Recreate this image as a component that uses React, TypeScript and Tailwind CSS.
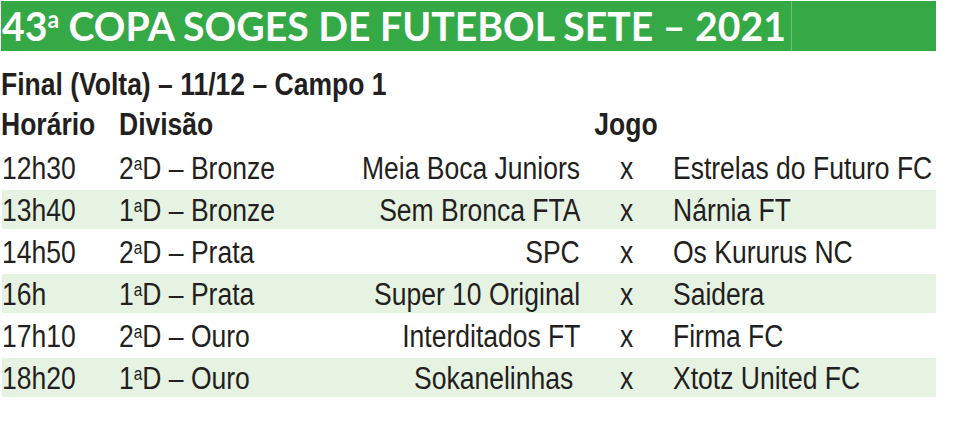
import type { ReactNode } from 'react'

type Match = {
  time: string
  rank: string
  level: string
  home: string
  away: string
  homePad?: boolean
}

const matches: Match[] = [
  { time: '12h30', rank: '2', level: 'Bronze', home: 'Meia Boca Juniors', away: 'Estrelas do Futuro FC' },
  { time: '13h40', rank: '1', level: 'Bronze', home: 'Sem Bronca FTA', away: 'Nárnia FT' },
  { time: '14h50', rank: '2', level: 'Prata', home: 'SPC', away: 'Os Kururus NC' },
  { time: '16h', rank: '1', level: 'Prata', home: 'Super 10 Original', away: 'Saidera' },
  { time: '17h10', rank: '2', level: 'Ouro', home: 'Interditados FT', away: 'Firma FC' },
  { time: '18h20', rank: '1', level: 'Ouro', home: 'Sokanelinhas', away: 'Xtotz United FC', homePad: true },
]

// narrow text: Arial metrics squeezed horizontally
function N({ children, align = 'left' }: { children: ReactNode; align?: 'left' | 'right' | 'center' }) {
  const origin = align === 'right' ? 'origin-right' : align === 'center' ? 'origin-center' : 'origin-left'
  return <span className={`inline-block whitespace-nowrap scale-x-[0.855] ${origin}`}>{children}</span>
}

function Division({ rank, level }: { rank: string; level: string }) {
  return (
    <N>
      {rank}
      <span className="relative -top-[9px] text-[18px]">a</span>D – {level}
    </N>
  )
}

export default function App() {
  return (
    <div
      className="h-[426px] w-[954px] overflow-hidden bg-white text-[#231f20]"
      style={{ fontFamily: '"Liberation Sans", Arial, sans-serif' }}
    >
      {/* Title band */}
      <div className="ml-[1px] mt-[1px] flex h-[50px] w-[935px]">
        <div className="w-[791px] shrink-0 overflow-hidden border-r border-[#6cc278] bg-[#34a946]">
          <h1
            className="origin-left scale-x-[0.955] whitespace-nowrap pl-[1px] text-[41px] font-bold leading-[50px] text-white"
            style={{ fontFamily: 'Lato, "Noto Sans", sans-serif' }}
          >
            43<span className="relative -top-[13px] text-[24px]">a</span> COPA SOGES DE FUTEBOL SETE – 2021
          </h1>
        </div>
        <div className="flex-1 bg-[#34a946]" />
      </div>

      {/* Subtitle */}
      <div className="ml-[1px] mt-[14px] h-[40px] text-[31px] font-bold leading-[40px]">
        <N>Final (Volta) – 11/12 – Campo 1</N>
      </div>

      {/* Column headings */}
      <div className="ml-[1px] flex h-[40px] w-[934px] text-[31px] font-bold leading-[40px]">
        <div className="w-[118px] shrink-0">
          <N>Horário</N>
        </div>
        <div className="w-[461px] shrink-0">
          <N>Divisão</N>
        </div>
        <div className="w-[93px] shrink-0 text-center">
          <N align="center">Jogo</N>
        </div>
      </div>

      {/* Matches */}
      <div className="flex flex-col">
        {matches.map((m, i) => (
          <div
            key={m.time}
            className={`ml-[2px] mt-[3px] flex h-[39px] w-[934px] text-[31px] leading-[42px] ${
              i % 2 === 1 ? 'bg-[#e6f2e2]' : ''
            }`}
          >
            <div className="w-[117px] shrink-0">
              <N>{m.time}</N>
            </div>
            <div className="w-[161px] shrink-0">
              <Division rank={m.rank} level={m.level} />
            </div>
            <div className={`w-[300px] shrink-0 text-right ${m.homePad ? 'pr-[7px]' : ''}`}>
              <N align="right">{m.home}</N>
            </div>
            <div className="w-[93px] shrink-0 text-center">
              <N align="center">x</N>
            </div>
            <div className="min-w-0 flex-1">
              <N>{m.away}</N>
            </div>
          </div>
        ))}
      </div>
    </div>
  )
}
